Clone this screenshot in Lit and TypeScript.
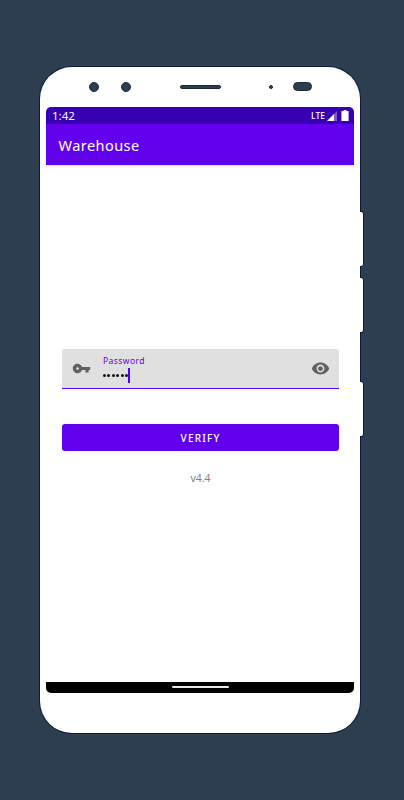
import { LitElement, html, css } from "lit";
import { customElement } from "lit/decorators.js";

@customElement("app-root")
export class AppRoot extends LitElement {
  static styles = css`
    :host { display: block; width: 404px; height: 800px; background: #2c3e50; font-family: "Noto Sans", Roboto, sans-serif; overflow: hidden; }
    .page { box-sizing: border-box; height: 800px; padding: 67px 44px 67px 40px; }
    .phone { position: relative; box-sizing: border-box; width: 320px; height: 666px; background: #fff; border-radius: 32px; box-shadow: 0 0 0 1px #0b1a3a; display: flex; flex-direction: column; padding: 0 6px; }
    .side { position: absolute; left: 320px; width: 3px; height: 54px; background: #fff; border: 1px solid #0b1a4a; border-left: 0; border-radius: 0 3px 3px 0; }
    .s1 { top: 144px; } .s2 { top: 210px; } .s3 { top: 314px; }
    .hardware { height: 40px; flex: none; position: relative; }
    .hole { position: absolute; background: #2c3e50; border: 0.5px solid #1b2a3a; box-sizing: border-box; }
    .cam1 { left: 43px; top: 15px; width: 10px; height: 10px; border-radius: 50%; }
    .cam2 { left: 75px; top: 15px; width: 10px; height: 10px; border-radius: 50%; }
    .speaker { left: 134px; top: 18px; width: 41px; height: 4px; border-radius: 2px; }
    .sensor { left: 223px; top: 18px; width: 4px; height: 4px; border-radius: 50%; }
    .flash { left: 247px; top: 15px; width: 19px; height: 9px; border-radius: 5px; }
    .screen { width: 308px; height: 586px; flex: none; display: flex; flex-direction: column; background: #fff; border-radius: 5px; overflow: hidden; }
    .status { height: 17px; flex: none; background: #3700b3; color: #fff; display: flex; align-items: center; justify-content: space-between; padding: 0 5px 0 6px; font-size: 11.5px; box-sizing: border-box; }
    .right { display: flex; align-items: center; gap: 1px; }
    .lte { font-size: 8.5px; font-weight: 500; }
    .appbar { height: 41px; flex: none; background: #6200ee; color: #fff; display: flex; align-items: center; padding-left: 12.5px; font-size: 14.5px; letter-spacing: 0.45px; box-shadow: 0 1px 2px rgba(0,0,0,.15); }
    .content { flex: 1; display: flex; flex-direction: column; padding: 184px 15px 0 16px; }
    .field { height: 40px; flex: none; box-sizing: border-box; background: #e0e0e0; border-radius: 3px 3px 0 0; border-bottom: 1.5px solid #4f00f5; display: flex; align-items: center; padding: 0 9.5px; }
    .field-body { flex: 1; padding-left: 12.5px; display: flex; flex-direction: column; margin-top: 1px; }
    .label { font-size: 8.5px; line-height: 11px; color: #6200ee; letter-spacing: 0.45px; }
    .value { display: flex; align-items: center; height: 16px; margin-top: 2px; }
    .dots { display: flex; gap: 1.4px; }
    .dot { width: 3px; height: 3px; border-radius: 50%; background: #111; }
    .caret { width: 2px; height: 15px; background: #4f00f5; }
    .verify { display: flex; height: 27px; margin-top: 35px; border: 0; border-radius: 3px; background: #6200ee; color: #fff; font: 500 10px "Noto Sans", sans-serif; letter-spacing: 1.2px; align-items: center; justify-content: center; padding: 0; width: 100%; flex: none; }
    .version { margin-top: 20px; text-align: center; color: #808080; font-size: 10.5px; line-height: 14px; }
    .nav { height: 11px; flex: none; background: #000; display: flex; align-items: center; justify-content: center; }
    .pill { width: 57px; height: 2px; background: #e8e8e8; border-radius: 1px; margin-bottom: 1px; }
    svg { display: block; flex: none; }
  `;

  render() {
    return html`<div class="page">
      <div class="phone">
        <div class="side s1"></div><div class="side s2"></div><div class="side s3"></div>
        <div class="hardware">
          <div class="hole cam1"></div><div class="hole cam2"></div>
          <div class="hole speaker"></div><div class="hole sensor"></div><div class="hole flash"></div>
        </div>
        <div class="screen">
          <div class="status">
            <span>1:42</span>
            <div class="right">
              <span class="lte">LTE</span>
              <svg width="12" height="12" viewBox="0 0 12 12"><path d="M1 11 L11 1 V11 Z" fill="#fff" fill-opacity=".35"/><path d="M1 11 L8 4 V11 Z" fill="#fff"/></svg>
              <svg style="margin-left:2px" width="8" height="11" viewBox="0 0 8 11"><path d="M2.6 0h2.8v1H7a.6.6 0 0 1 .6.6v8.8a.6.6 0 0 1-.6.6H1a.6.6 0 0 1-.6-.6V1.600A.6.6 0 0 1 1 1h1.600z" fill="#fff"/></svg>
            </div>
          </div>
          <div class="appbar">Warehouse</div>
          <div class="content">
            <div class="field">
              <svg width="19" height="19" viewBox="0 0 24 24" fill="#616161"><path fill-rule="evenodd" d="M12.65 10C11.83 7.670 9.610 6 7 6c-3.310 0-6 2.690-6 6s2.690 6 6 6c2.610 0 4.830-1.670 5.650-4H17v3h4v-3h2v-4H12.650zM7 13.700c-.94 0-1.700-.76-1.700-1.700s.76-1.700 1.700-1.700 1.700.76 1.700 1.700-.76 1.700-1.700 1.700z"/></svg>
              <div class="field-body">
                <span class="label">Password</span>
                <div class="value">
                  <div class="dots"><i class="dot"></i><i class="dot"></i><i class="dot"></i><i class="dot"></i><i class="dot"></i><i class="dot"></i></div>
                  <div class="caret"></div>
                </div>
              </div>
              <svg width="19" height="19" viewBox="0 0 24 24" fill="#616161"><path d="M12 4.500C7 4.500 2.730 7.610 1 12c1.730 4.390 6 7.500 11 7.500s9.270-3.110 11-7.500c-1.730-4.390-6-7.500-11-7.500zM12 17c-2.760 0-5-2.240-5-5s2.240-5 5-5 5 2.240 5 5-2.240 5-5 5zm0-8c-1.660 0-3 1.340-3 3s1.340 3 3 3 3-1.340 3-3-1.340-3-3-3z"/></svg>
            </div>
            <button class="verify">VERIFY</button>
            <div class="version">v4.4</div>
          </div>
          <div class="nav"><div class="pill"></div></div>
        </div>
      </div>
    </div>`;
  }
}
